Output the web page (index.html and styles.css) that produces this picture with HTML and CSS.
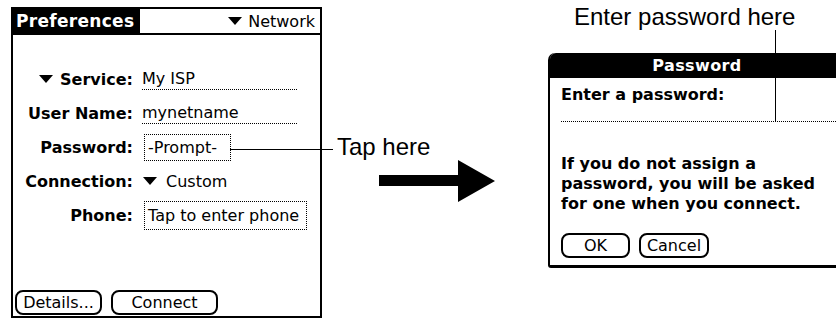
FILE: index.html
```
<!DOCTYPE html>
<html lang="en">
<head>
    <meta charset="UTF-8">
    <link rel="stylesheet" href="styles.css">
    <title>Network Preferences - Password</title>
</head>
<body>
    <div class="figure">
        <!-- left: the Preferences screen -->
        <div class="screen">
            <div class="title-bar">
                <div class="title-tab">Preferences</div>
                <div class="title-pick">
                    <svg class="tri" width="14" height="8" viewBox="0 0 14 8"><polygon points="0,0 14,0 7,8"/></svg>
                    Network
                </div>
            </div>

            <div class="rows">
                <div class="label">
                    <svg class="tri" width="14" height="8" viewBox="0 0 14 8"><polygon points="0,0 14,0 7,8"/></svg>
                    Service:
                </div>
                <div class="value"><span class="line-field">My ISP</span></div>

                <div class="label">User Name:</div>
                <div class="value"><span class="line-field">mynetname</span></div>

                <div class="label">Password:</div>
                <div class="value"><span class="box-field pw-field">-Prompt-</span></div>

                <div class="label">Connection:</div>
                <div class="value">
                    <svg class="tri" width="14" height="8" viewBox="0 0 14 8"><polygon points="0,0 14,0 7,8"/></svg>
                    Custom
                </div>

                <div class="label">Phone:</div>
                <div class="value"><span class="box-field phone-field">Tap to enter phone</span></div>
            </div>

            <div class="buttons">
                <div class="btn btn-details">Details...</div>
                <div class="btn btn-connect">Connect</div>
            </div>
        </div>

        <!-- middle: callout and arrow -->
        <div class="middle">
            <div class="callout tap-label">Tap here</div>
            <svg class="arrow" width="116" height="42" viewBox="0 0 116 42">
                <polygon points="0,15 79,15 79,0 116,21 79,42 79,26 0,26"/>
            </svg>
        </div>

        <!-- right: the Password dialog -->
        <div class="right">
            <div class="callout enter-label">Enter password here</div>
            <div class="pointer"></div>
            <div class="dialog">
                <div class="dialog-title">Password</div>
                <div class="dialog-body">
                    <div class="prompt">Enter a password:</div>
                    <div class="entry"></div>
                    <p class="note">If you do not assign a<br>password, you will be asked<br>for one when you connect.</p>
                    <div class="buttons">
                        <div class="btn btn-ok">OK</div>
                        <div class="btn btn-cancel">Cancel</div>
                    </div>
                </div>
            </div>
        </div>
    </div>
</body>
</html>
```

FILE: styles.css
```
* {
    box-sizing: border-box;
}

body {
    margin: 0;
    background-color: #fff;
    color: #000;
    font-family: "DejaVu Sans", sans-serif;
    font-size: 16px;
    overflow: hidden;
}

.figure {
    display: flex;
    align-items: flex-start;
    width: 836px;
    height: 320px;
    overflow: hidden;
}

.tri {
    display: inline-block;
    fill: #000;
    vertical-align: middle;
}

/* ---------- Preferences screen ---------- */

.screen {
    display: flex;
    flex-direction: column;
    flex: none;
    width: 311px;
    height: 311px;
    margin: 7px 0 0 11px;
    border: 2px solid #000;
}

.title-bar {
    display: flex;
    justify-content: space-between;
    align-items: stretch;
    height: 26px;
    border-bottom: 2px solid #000;
}

.title-tab {
    display: flex;
    align-items: center;
    width: 127px;
    padding-left: 3px;
    background-color: #000;
    color: #fff;
    font-weight: bold;
    font-size: 17px;
    letter-spacing: 0.3px;
}

.title-pick {
    display: flex;
    align-items: center;
    gap: 6px;
    padding-right: 5px;
}

.rows {
    display: grid;
    grid-template-columns: 120px 1fr;
    grid-auto-rows: 28px;
    column-gap: 9px;
    row-gap: 6px;
    padding-top: 30px;
}

.label {
    display: flex;
    align-items: center;
    justify-content: flex-end;
    gap: 7px;
    font-weight: bold;
    white-space: nowrap;
}

.value {
    display: flex;
    align-items: center;
    gap: 9px;
    white-space: nowrap;
}

.value .tri {
    margin-left: 1px;
}

.line-field {
    display: block;
    width: 155px;
    line-height: 20px;
    border-bottom: 1px dotted #000;
}

.box-field {
    display: flex;
    align-items: center;
    height: 28px;
    margin-left: 2px;
    padding: 0 3px;
    border: 1px dotted #000;
}

.pw-field {
    position: relative;
    width: 87px;
    height: 27px;
}

/* leader line out to the "Tap here" callout */
.pw-field::after {
    content: "";
    position: absolute;
    left: 100%;
    top: 14px;
    width: 103px;
    height: 1px;
    background-color: #000;
}

.phone-field {
    width: 163px;
    height: 29px;
}

.buttons {
    display: flex;
    gap: 9px;
}

.screen .buttons {
    margin-top: auto;
    margin-bottom: 1px;
    padding-left: 2px;
}

.btn {
    display: flex;
    align-items: center;
    justify-content: center;
    height: 25px;
    border: 2px solid #000;
    border-radius: 8px;
}

.btn-details {
    width: 87px;
}

.btn-connect {
    width: 107px;
}

/* ---------- callouts ---------- */

.callout {
    font-family: "Liberation Sans", Arial, sans-serif;
    font-size: 24px;
    line-height: 28px;
    white-space: nowrap;
}

.middle {
    display: flex;
    flex-direction: column;
    flex: none;
    width: 226px;
    margin-top: 133px;
}

.tap-label {
    padding-left: 15px;
}

.arrow {
    margin: -1px 0 0 57px;
    fill: #000;
}

/* ---------- Password dialog ---------- */

.right {
    position: relative;
    flex: none;
    width: 296px;
    padding-top: 3px;
}

.enter-label {
    padding-left: 26px;
    margin-bottom: 22px;
}

.pointer {
    position: absolute;
    left: 227px;
    top: 30px;
    width: 1px;
    height: 92px;
    background-color: #000;
}

.dialog {
    height: 215px;
    border-left: 2px solid #000;
    border-bottom: 3px solid #000;
    border-top-left-radius: 7px;
    border-bottom-left-radius: 3px;
}

.dialog-title {
    display: flex;
    align-items: center;
    justify-content: center;
    height: 25px;
    background-color: #000;
    border-top-left-radius: 6px;
    color: #fff;
    font-weight: bold;
    letter-spacing: 0.4px;
}

.dialog-body {
    padding: 7px 0 0 11px;
}

.prompt {
    font-weight: bold;
    line-height: 20px;
}

.entry {
    height: 17px;
    border-bottom: 1px dotted #000;
}

.note {
    margin: 32px 0 19px;
    font-weight: bold;
    line-height: 20px;
}

.btn-ok {
    width: 69px;
}

.btn-cancel {
    width: 70px;
}
```
